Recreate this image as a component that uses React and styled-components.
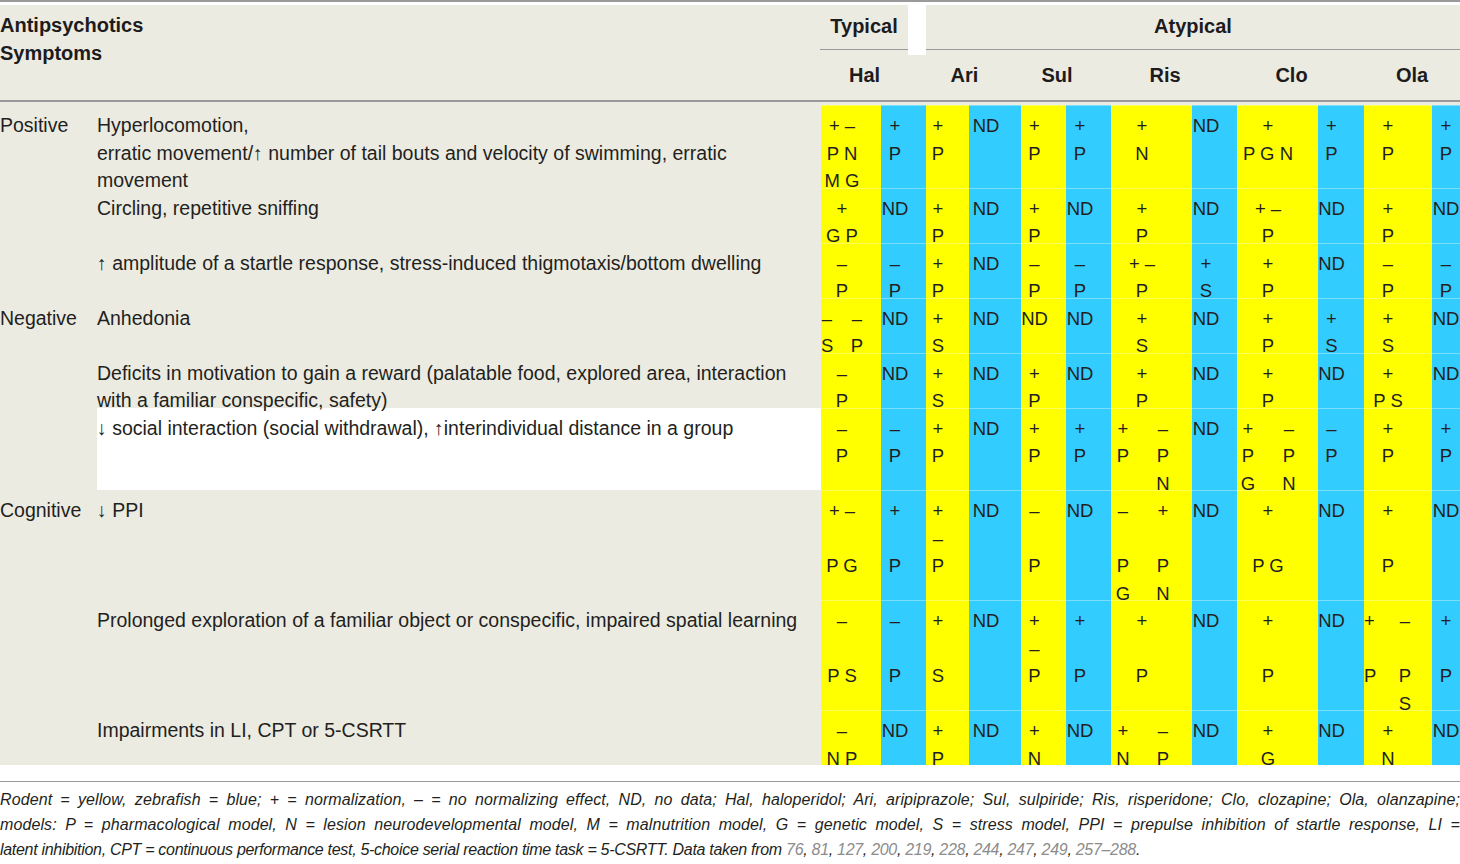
import styled, { createGlobalStyle } from 'styled-components';

const GlobalStyle = createGlobalStyle`
  body {
    margin: 0;
    background: #fff;
    font-family: "Liberation Sans", Arial, sans-serif;
    color: #231f20;
  }
`;

const BEIGE = '#ecebe2';
const YELLOW = '#ffff00';
const BLUE = '#33ccff';
const LINE = 27.5;

// widths of the body columns: category, symptom, then rodent/zebrafish per drug
const COLS = [97, 724, 60, 45, 43, 52, 45, 45, 81, 45, 81, 46, 68, 28];

// where the text sits inside each coloured cell (centred in the first w px)
const ZONES = [
  { w: 42, split: [12, 48] },
  { w: 28 },
  { w: 24 },
  { w: 34 },
  { w: 27 },
  { w: 28 },
  { w: 62, split: [24, 56] },
  { w: 28 },
  { w: 62, split: [22, 60] },
  { w: 27 },
  { w: 48, split: [10, 62] },
  { w: 28 },
];

const rows = [
  {
    cat: 'Positive', lines: 3,
    sym: ['Hyperlocomotion,', 'erratic movement/↑ number of tail bouts and velocity of swimming, erratic', 'movement'],
    cells: [['+ –', 'P N', 'M G'], ['+', 'P'], ['+', 'P'], ['ND'], ['+', 'P'], ['+', 'P'], ['+', 'N'], ['ND'], ['+', 'P G N'], ['+', 'P'], ['+', 'P'], ['+', 'P']],
  },
  {
    lines: 2,
    sym: ['Circling, repetitive sniffing'],
    cells: [['+', 'G P'], ['ND'], ['+', 'P'], ['ND'], ['+', 'P'], ['ND'], ['+', 'P'], ['ND'], ['+ –', 'P'], ['ND'], ['+', 'P'], ['ND']],
  },
  {
    lines: 2,
    sym: ['↑ amplitude of a startle response, stress-induced thigmotaxis/bottom dwelling'],
    cells: [['–', 'P'], ['–', 'P'], ['+', 'P'], ['ND'], ['–', 'P'], ['–', 'P'], ['+ –', 'P'], ['+', 'S'], ['+', 'P'], ['ND'], ['–', 'P'], ['–', 'P']],
  },
  {
    cat: 'Negative', lines: 2,
    sym: ['Anhedonia'],
    cells: [{ split: [['–', 'S'], ['–', 'P']] }, ['ND'], ['+', 'S'], ['ND'], ['ND'], ['ND'], ['+', 'S'], ['ND'], ['+', 'P'], ['+', 'S'], ['+', 'S'], ['ND']],
  },
  {
    lines: 2,
    sym: ['Deficits in motivation to gain a reward (palatable food, explored area, interaction', 'with a familiar conspecific, safety)'],
    cells: [['–', 'P'], ['ND'], ['+', 'S'], ['ND'], ['+', 'P'], ['ND'], ['+', 'P'], ['ND'], ['+', 'P'], ['ND'], ['+', 'P S'], ['ND']],
  },
  {
    lines: 3, white: true,
    sym: ['↓ social interaction (social withdrawal), ↑interindividual distance in a group'],
    cells: [['–', 'P'], ['–', 'P'], ['+', 'P'], ['ND'], ['+', 'P'], ['+', 'P'], { split: [['+', 'P'], ['–', 'P', 'N']] }, ['ND'], { split: [['+', 'P', 'G'], ['–', 'P', 'N']] }, ['–', 'P'], ['+', 'P'], ['+', 'P']],
  },
  {
    cat: 'Cognitive', lines: 4,
    sym: ['↓ PPI'],
    cells: [['+ –', '', 'P G'], ['+', '', 'P'], ['+', '–', 'P'], ['ND'], ['–', '', 'P'], ['ND'], { split: [['–', '', 'P', 'G'], ['+', '', 'P', 'N']] }, ['ND'], ['+', '', 'P G'], ['ND'], ['+', '', 'P'], ['ND']],
  },
  {
    lines: 4,
    sym: ['Prolonged exploration of a familiar object or conspecific, impaired spatial learning'],
    cells: [['–', '', 'P S'], ['–', '', 'P'], ['+', '', 'S'], ['ND'], ['+', '–', 'P'], ['+', '', 'P'], ['+', '', 'P'], ['ND'], ['+', '', 'P'], ['ND'], { split: [['+', '', 'P'], ['–', '', 'P', 'S']] }, ['+', '', 'P']],
  },
  {
    lines: 2,
    sym: ['Impairments in LI, CPT or 5-CSRTT'],
    cells: [['–', 'N P'], ['ND'], ['+', 'P'], ['ND'], ['+', 'N'], ['ND'], { split: [['+', 'N'], ['–', 'P']] }, ['ND'], ['+', 'G'], ['ND'], ['+', 'N'], ['ND']],
  },
];

const drugs = [
  { name: 'Hal', w: 105 },
  { name: 'Ari', w: 95 },
  { name: 'Sul', w: 90 },
  { name: 'Ris', w: 126 },
  { name: 'Clo', w: 127 },
  { name: 'Ola', w: 96 },
];

const refs = ['76', '81', '127', '200', '219', '228', '244', '247', '249', '257–288'];

const Page = styled.div`
  width: 1460px;
`;

const TopRule = styled.div`
  height: 2px;
  background: #9a9a9a;
  margin-bottom: 3px;
`;

const Head = styled.div`
  display: grid;
  grid-template-columns: 821px ${drugs.map((d) => d.w + 'px').join(' ')};
  grid-template-rows: 45px 50px;
  background: ${BEIGE};
  border-bottom: 2px solid #9a9a9a;
  font-size: 20px;
  font-weight: 700;
  color: #1d1b1c;
`;

const CornerCell = styled.div`
  grid-row: 1 / span 2;
  padding-top: 6px;
  line-height: 28px;
`;

const GroupCell = styled.div`
  grid-column: ${(p) => p.$col};
  display: flex;
`;

const GroupLabel = styled.div`
  flex: 1;
  display: flex;
  align-items: center;
  justify-content: center;
  padding-bottom: 2px;
  border-bottom: 1.5px solid #9a9a9a;
  margin-left: ${(p) => (p.$inset ? '-1px' : '0')};
`;

const HeadGap = styled.div`
  width: 18px;
  background: #fff;
  margin-bottom: -5px;
  position: relative;
  z-index: 1;
`;

const DrugHead = styled.div`
  display: flex;
  align-items: center;
  justify-content: center;
  padding-right: ${(p) => (p.$last ? '0' : '18px')};
`;

const Body = styled.div`
  background: ${BEIGE};
  padding-top: 3px;
`;

const Row = styled.div`
  display: grid;
  grid-template-columns: ${COLS.map((c) => c + 'px').join(' ')};
  grid-template-rows: ${(p) => p.$lines * LINE}px;
  height: ${(p) => p.$lines * LINE}px;
`;

const TextCell = styled.div`
  min-height: 0;
  padding-top: 7px;
  background: ${(p) => (p.$white ? '#fff' : 'transparent')};
`;

const TextLines = styled.div`
  position: relative;
  z-index: 1;
  font-size: 19.5px;
  line-height: ${LINE}px;
  white-space: nowrap;
`;

const DataCell = styled.div`
  display: flex;
  min-height: 0;
  padding-top: 7px;
  background: ${(p) => (p.$tone === 'blue' ? BLUE : YELLOW)};
  box-shadow: inset 0 1px 0 rgba(255, 255, 255, 0.35);
`;

const Stack = styled.div`
  position: relative;
  z-index: 1;
  width: ${(p) => p.$w}px;
  flex-shrink: 0;
`;

const Mark = styled.div`
  height: ${LINE}px;
  font-size: 18.5px;
  line-height: ${LINE}px;
  text-align: center;
  white-space: nowrap;
`;

const Note = styled.div`
  margin-top: 16px;
  border-top: 1.5px solid #9a9a9a;
  padding-top: 5px;
  font-size: 16px;
  font-style: italic;
  line-height: 25px;
`;

const NoteLine = styled.div`
  text-align: justify;
  text-align-last: ${(p) => (p.$last ? 'left' : 'justify')};
  letter-spacing: ${(p) => (p.$last ? '-0.3px' : '0.1px')};
`;

const Ref = styled.span`
  color: #8c8c8c;
`;

const Marks = ({ lines, w }) => (
  <Stack $w={w}>
    {lines.map((t, i) => (
      <Mark key={i}>{t || '\u00a0'}</Mark>
    ))}
  </Stack>
);

const Cell = ({ data, index }) => {
  const zone = ZONES[index];
  const tone = index % 2 === 0 ? 'yellow' : 'blue';
  return (
    <DataCell $tone={tone}>
      {Array.isArray(data) ? (
        <Marks lines={data} w={zone.w} />
      ) : (
        data.split.map((lines, i) => <Marks key={i} lines={lines} w={zone.split[i]} />)
      )}
    </DataCell>
  );
};

const App = () => {
  return (
    <>
      <GlobalStyle />
      <Page>
        <TopRule />
        <Head>
          <CornerCell>
            Antipsychotics
            <br />
            Symptoms
          </CornerCell>
          <GroupCell $col="2">
            <GroupLabel $inset>Typical</GroupLabel>
            <HeadGap />
          </GroupCell>
          <GroupCell $col="3 / span 5">
            <GroupLabel>Atypical</GroupLabel>
          </GroupCell>
          {drugs.map((d, i) => (
            <DrugHead key={d.name} $last={i === drugs.length - 1}>
              {d.name}
            </DrugHead>
          ))}
        </Head>

        <Body>
          {rows.map((r, ri) => (
            <Row key={ri} $lines={r.lines}>
              <TextCell>
                <TextLines>{r.cat || ''}</TextLines>
              </TextCell>
              <TextCell $white={r.white}>
                <TextLines>
                  {r.sym.map((s, i) => (
                    <div key={i}>{s}</div>
                  ))}
                </TextLines>
              </TextCell>
              {r.cells.map((c, ci) => (
                <Cell key={ci} data={c} index={ci} />
              ))}
            </Row>
          ))}
        </Body>

        <Note>
          <NoteLine>
            Rodent = yellow, zebrafish = blue; + = normalization, – = no normalizing effect, ND, no data; Hal, haloperidol; Ari, aripiprazole; Sul, sulpiride; Ris, risperidone; Clo, clozapine; Ola, olanzapine;
          </NoteLine>
          <NoteLine>
            models: P = pharmacological model, N = lesion neurodevelopmental model, M = malnutrition model, G = genetic model, S = stress model, PPI = prepulse inhibition of startle response, LI =
          </NoteLine>
          <NoteLine $last>
            latent inhibition, CPT = continuous performance test, 5-choice serial reaction time task = 5-CSRTT. Data taken from{' '}
            {refs.map((n, i) => (
              <span key={n}>
                <Ref>{n}</Ref>
                {i < refs.length - 1 ? ', ' : '.'}
              </span>
            ))}
          </NoteLine>
        </Note>
      </Page>
    </>
  );
};

export default App;
